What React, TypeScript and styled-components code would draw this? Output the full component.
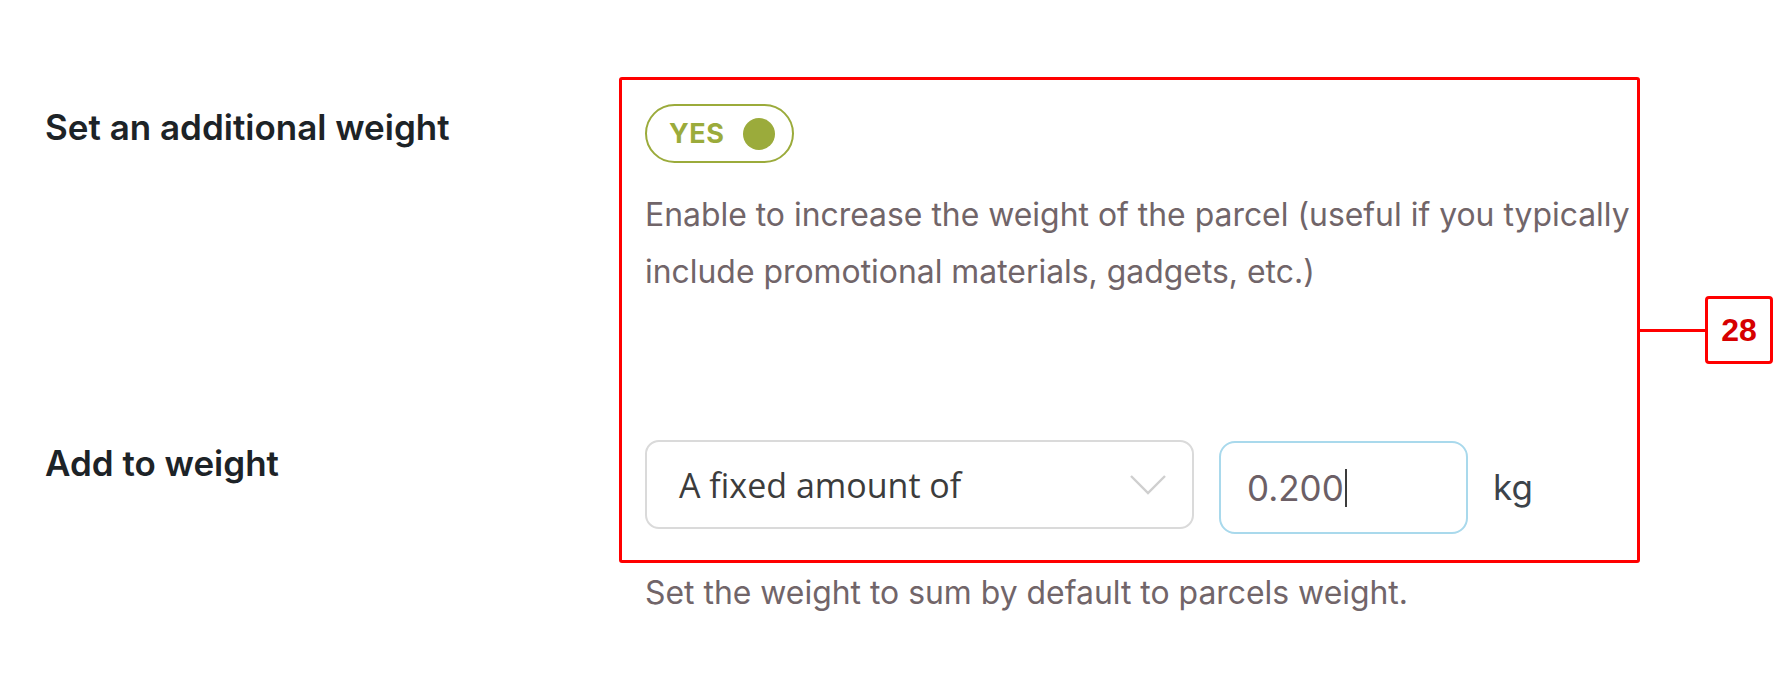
import React from 'react';
import styled, { createGlobalStyle } from 'styled-components';

const GlobalStyle = createGlobalStyle`
  html, body {
    margin: 0;
    padding: 0;
    background: #fff;
  }
  body {
    font-family: Inter, "Liberation Sans", sans-serif;
    -webkit-font-smoothing: antialiased;
  }
`;

const olive = '#9bab3b';
const mauve = '#716569';

const Page = styled.div`
  position: relative;
  width: 1792px;
  height: 678px;
  box-sizing: border-box;
  padding: 104px 0 0 45px;
`;

const Row = styled.div<{ $gap?: number }>`
  display: grid;
  grid-template-columns: 600px 1fr;
  margin-bottom: ${p => p.$gap ?? 0}px;
`;

const Label = styled.div<{ $top: number }>`
  padding-top: ${p => p.$top}px;
  font-size: 35px;
  font-weight: 600;
  line-height: 44px;
  color: #1d2327;
`;

const Field = styled.div`
  display: flex;
  flex-direction: column;
  align-items: flex-start;
`;

const Toggle = styled.div`
  box-sizing: border-box;
  width: 149px;
  height: 59px;
  border: 2px solid ${olive};
  border-radius: 30px;
  display: flex;
  align-items: center;
  justify-content: space-between;
  padding: 0 17px 0 22px;
`;

const ToggleText = styled.span`
  color: ${olive};
  font-size: 27px;
  font-weight: 700;
  letter-spacing: 0.5px;
`;

const Knob = styled.span`
  width: 32px;
  height: 32px;
  border-radius: 50%;
  background: ${olive};
`;

const Description = styled.p<{ $top: number }>`
  margin: ${p => p.$top}px 0 0;
  font-size: 31.9px;
  line-height: 57px;
  color: ${mauve};
  white-space: nowrap;
`;

const Controls = styled.div`
  display: flex;
  align-items: flex-start;
  gap: 25px;
`;

const Select = styled.div`
  box-sizing: border-box;
  width: 549px;
  height: 89px;
  border: 2px solid #dadada;
  border-radius: 14px;
  display: flex;
  align-items: center;
  justify-content: space-between;
  padding: 0 26px 0 32px;
  font-family: "Open Sans", "Liberation Sans", sans-serif;
  font-size: 34px;
  color: #3c3c3c;
`;

const NumberInput = styled.div`
  box-sizing: border-box;
  width: 249px;
  height: 93px;
  margin-top: 1px;
  border: 2px solid #a9d9ec;
  border-radius: 16px;
  display: flex;
  align-items: center;
  padding: 0 26px;
  font-size: 35px;
  color: #6c5f66;
`;

const Caret = styled.span`
  display: inline-block;
  width: 2px;
  height: 38px;
  margin-left: 1px;
  background: #3c3c3c;
`;

const Unit = styled.span`
  align-self: center;
  font-size: 35px;
  color: #3c434a;
`;

const Highlight = styled.div`
  position: absolute;
  left: 619px;
  top: 77px;
  width: 1021px;
  height: 486px;
  box-sizing: border-box;
  border: 3px solid #f00;
  border-radius: 3px;
  pointer-events: none;
`;

const Connector = styled.div`
  position: absolute;
  left: 1640px;
  top: 329px;
  width: 65px;
  height: 3px;
  background: #f00;
`;

const Badge = styled.div`
  position: absolute;
  left: 1705px;
  top: 296px;
  width: 68px;
  height: 68px;
  box-sizing: border-box;
  border: 3px solid #f00;
  border-radius: 4px;
  background: #fff;
  display: flex;
  align-items: center;
  justify-content: center;
  font-family: "Liberation Sans", Arial, sans-serif;
  font-size: 32px;
  font-weight: 700;
  color: #d60000;
`;

const Chevron = () => (
  <svg width="36" height="20" viewBox="0 0 36 20" fill="none">
    <path d="M1 1 L18 18 L35 1" stroke="#cfcfcf" strokeWidth="2.4" />
  </svg>
);

export default function App() {
  return (
    <>
      <GlobalStyle />
      <Page>
        <Row $gap={140}>
          <Label $top={1}>Set an additional weight</Label>
          <Field>
            <Toggle>
              <ToggleText>YES</ToggleText>
              <Knob />
            </Toggle>
            <Description $top={23}>
              Enable to increase the weight of the parcel (useful if you typically
              <br />
              include promotional materials, gadgets, etc.)
            </Description>
          </Field>
        </Row>
        <Row>
          <Label $top={1}>Add to weight</Label>
          <Field>
            <Controls>
              <Select>
                <span>A fixed amount of</span>
                <Chevron />
              </Select>
              <NumberInput>
                0.200
                <Caret />
              </NumberInput>
              <Unit>kg</Unit>
            </Controls>
            <Description $top={30}>
              Set the weight to sum by default to parcels weight.
            </Description>
          </Field>
        </Row>
        <Highlight />
        <Connector />
        <Badge>28</Badge>
      </Page>
    </>
  );
}
